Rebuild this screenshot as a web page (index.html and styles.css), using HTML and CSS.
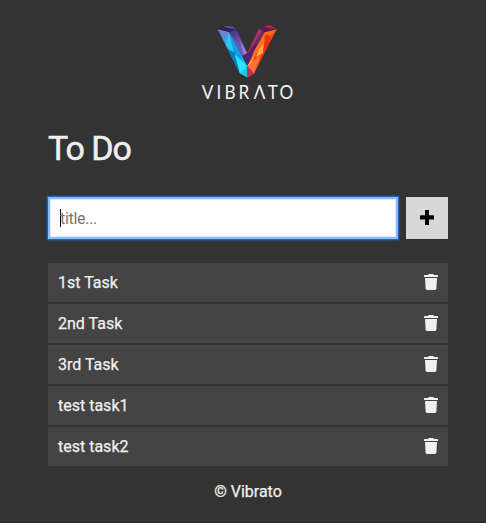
FILE: index.html
```html
<!DOCTYPE html>
<html lang="en">
<head>
<meta charset="utf-8">
<title>To Do</title>
<link rel="stylesheet" href="styles.css">
</head>
<body>
<svg class="defs" width="0" height="0" aria-hidden="true">
  <symbol id="trash" viewBox="0 0 14 16">
    <path d="M.6 1H4L4.7 0H9.3L10 1H13.4Q14 1 14 1.6V3H0V1.6Q0 1 .6 1ZM1 4H13L12.4 14.6Q12.3 16 11 16H3Q1.7 16 1.6 14.6Z"/>
  </symbol>
</svg>
<main class="app">
  <svg class="logo" viewBox="0 0 96 80" role="img" aria-label="Vibrato">
    <defs>
      <linearGradient id="blue" x1="0" y1="0" x2="0.7" y2="1"><stop offset="0" stop-color="#558ed0"/><stop offset=".4" stop-color="#20b4e9"/><stop offset="1" stop-color="#10caf0"/></linearGradient>
      <linearGradient id="violet" x1="0" y1="0" x2=".6" y2="1"><stop offset="0" stop-color="#452779"/><stop offset=".6" stop-color="#7953b3"/><stop offset="1" stop-color="#7565c5"/></linearGradient>
      <linearGradient id="fire" x1="1" y1="0" x2="0.1" y2="1"><stop offset="0" stop-color="#f8611b"/><stop offset=".35" stop-color="#e62c10"/><stop offset="1" stop-color="#f65a21"/></linearGradient>
    </defs>
    <path fill="url(#blue)" d="M17.7 9.3L29 12L47.3 46V57.6L40 53.5Z"/>
    <path fill="#6b83d0" d="M17.7 9.3L29 12L25 20Z"/>
    <path fill="#29c9f0" d="M29 12L26 25L34 33Z"/>
    <path fill="#159ede" d="M29 12L42 37L41 42L34 33Z"/>
    <path fill="#087ac4" d="M28 29L35 33L40 53.5Z"/>
    <path fill="#06b8ef" d="M34 33L47.3 46L41 47L37 41Z"/>
    <path fill="#25e6fb" d="M35 35L47.3 46L40 53.5Z"/>
    <path fill="url(#violet)" d="M29 12L36 9L47.3 33V46Z"/>
    <path fill="#4e63b8" d="M29 12L40 26L43 37Z"/>
    <path fill="#9c7bd1" d="M40 21L47.3 33L44 35Z"/>
    <path fill="#3b286d" d="M42 36L47.3 33V46Z"/>
    <path fill="#292456" d="M17.7 9.3L23 5.7L36 9L29 12Z"/>
    <path fill="#6556ad" d="M23 5.7L33 6.7L36 9L28 8Z"/>
    <path fill="#6a2864" d="M59 8.5L65 12L47.3 46V33Z"/>
    <path fill="#a83358" d="M59 8.5L62 11L50 31L47.3 33Z"/>
    <path fill="#552069" d="M59 22L47.3 42V36L52 27Z"/>
    <path fill="url(#fire)" d="M65 12L76.7 9.3L54 53.5L47.3 57.6V46Z"/>
    <path fill="#ff6b18" d="M65 12L76.7 9.3L70 16L63 29Z"/>
    <path fill="#e93113" d="M66 14L70 16L63 30L62 35Z"/>
    <path fill="#ffac3e" d="M64 16L63 33L56 37L59 28Z"/>
    <path fill="#fa7022" d="M65 12L63 24L51 41L54 31Z"/>
    <path fill="#f1b04e" d="M55 34L47.3 46L51 45Z"/>
    <path fill="#ff7134" d="M61 34L54 53.5L48 46Z"/>
    <path fill="#c02e59" d="M47.3 46L54 53.5L47.3 57.6Z"/>
    <path fill="#551c58" d="M59 8.5L64 6L76.7 9.3L65 12Z"/>
    <path fill="#b32149" d="M64 6L71 5L76.7 9.3L67 8Z"/>
    <text class="wordmark" transform="scale(.92 1)" x="1.9 18 26.6 41.9 58.5 73.6 86.3" y="79.4">VIBRΛTO</text>
  </svg>
  <h1 class="title">To Do</h1>
  <form class="entry">
    <div class="field"><span class="caret"></span><span>title...</span></div>
    <button class="add" type="button" aria-label="Add"><svg width="14" height="15" viewBox="0 0 14 15"><path d="M5 0H9V5.3H13.2Q14 5.3 14 6.1V9.4H9V15H5V9.4H0V6.1Q0 5.3 .8 5.3H5Z"/></svg></button>
  </form>
  <ul class="tasks">
    <li class="task">1st Task<svg class="trash"><use href="#trash"/></svg></li>
    <li class="task">2nd Task<svg class="trash"><use href="#trash"/></svg></li>
    <li class="task">3rd Task<svg class="trash"><use href="#trash"/></svg></li>
    <li class="task">test task1<svg class="trash"><use href="#trash"/></svg></li>
    <li class="task">test task2<svg class="trash"><use href="#trash"/></svg></li>
  </ul>
  <footer class="footer">© Vibrato</footer>
</main>
</body>
</html>
```
FILE: styles.css
```css
* { box-sizing: border-box; }
body {
  margin: 0;
  height: 523px;
  overflow: hidden;
  background: #333;
  border-bottom: 1px solid #2d282b;
  color: #f0f0f0;
  font: 400 16px/19px Roboto, sans-serif;
  -webkit-text-stroke: .25px #f0f0f0;
}
.defs { display: none; }
.app {
  display: flex;
  flex-direction: column;
  width: 400px;
  margin-left: 48px;
  padding-top: 20px;
}
.logo { width: 96px; height: 80px; align-self: center; overflow: visible; }
.wordmark { font: 400 18.7px Lato, sans-serif; fill: #f4f4f4; -webkit-text-stroke: 0; }
.title {
  margin: 28px 0 0;
  font-size: 34px;
  font-weight: 400;
  line-height: 40px;
  letter-spacing: -1.1px;
  -webkit-text-stroke: .5px #f0f0f0;
}
.entry { display: flex; gap: 8px; margin-top: 29px; }
.field {
  display: flex;
  align-items: center;
  flex: 1;
  height: 42px;
  padding: 0 10px;
  border: 2px solid #8cbcff;
  background: #fff;
  box-shadow: inset 0 0 0 1px #dbeaff, 0 0 0 1px #1b64bd, 0 0 2px 1px #1668cf;
  color: #757575;
  -webkit-text-stroke: 0;
  letter-spacing: -.3px;
}
.caret { width: 1px; height: 18px; margin-right: -1px; background: #000; }
.add {
  display: flex;
  align-items: center;
  justify-content: center;
  width: 42px;
  height: 42px;
  padding: 0 0 1px;
  border: 0;
  background: #d8d8d8;
}
.tasks {
  display: flex;
  flex-direction: column;
  gap: 2px;
  margin: 24px 0 0;
  padding: 0;
  list-style: none;
}
.task {
  display: flex;
  align-items: center;
  justify-content: space-between;
  height: 39px;
  padding: 0 10px;
  background: #444;
}
.trash { width: 14px; height: 16px; margin-bottom: 1px; fill: #f0f0f0; }
.footer { margin-top: 16px; text-align: center; }
```
